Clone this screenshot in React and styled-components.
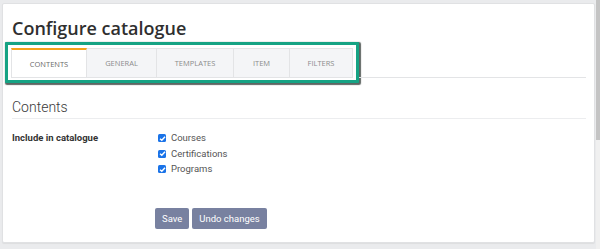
import React from "react";
import styled, { createGlobalStyle } from "styled-components";

const GlobalStyle = createGlobalStyle`
  html, body {
    margin: 0;
    padding: 0;
    background: #eaebed;
    font-family: Roboto, "Open Sans", sans-serif;
    color: #333;
  }
`;

const tabs = ["Contents", "General", "Templates", "Item", "Filters"];
const tabWidths = [76, 70, 77, 56, 63];
const options = ["Courses", "Certifications", "Programs"];

function App() {
  return (
    <>
      <GlobalStyle />
      <Page>
        <Frame>
          <Card>
            <Title>Configure catalogue</Title>
            <TabRow>
              <Highlight>
                <TabList>
                  {tabs.map((t, i) => (
                    <Tab key={t} $active={i === 0} $w={tabWidths[i]}>
                      {t}
                    </Tab>
                  ))}
                </TabList>
              </Highlight>
              <TabRule />
            </TabRow>
            <SectionTitle>Contents</SectionTitle>
            <FieldRow>
              <FieldLabel>Include in catalogue</FieldLabel>
              <Options>
                {options.map((o) => (
                  <Option key={o}>
                    <Check>
                      <svg width="7" height="7" viewBox="0 0 10 10">
                        <path d="M1.5 5.2 L4 7.6 L8.6 2.4" fill="none" stroke="#fff" strokeWidth="2" />
                      </svg>
                    </Check>
                    {o}
                  </Option>
                ))}
              </Options>
            </FieldRow>
            <Actions>
              <Button>Save</Button>
              <Button>Undo changes</Button>
            </Actions>
          </Card>
        </Frame>
        <Scrollbar>
          <Thumb />
        </Scrollbar>
      </Page>
    </>
  );
}

export default App;

const Page = styled.div`
  display: flex;
  height: 249px;
  width: 600px;
  overflow: hidden;
`;

const Frame = styled.div`
  flex: 1;
  padding: 3px 1px 4px 2px;
`;

const Card = styled.div`
  height: 240px;
  background: #fff;
  border: 1px solid #e0e1e3;
  border-radius: 2px;
  box-sizing: border-box;
  padding: 0 8px 0 9px;
  box-shadow: 0 1px 1px rgba(0, 0, 0, 0.06);
`;

const Title = styled.h1`
  margin: 0;
  padding-top: 12px;
  font-family: "Open Sans", sans-serif;
  font-size: 18px;
  font-weight: 600;
  line-height: 24px;
  color: #2f2f2f;
`;

const TabRow = styled.div`
  display: flex;
  align-items: flex-end;
  margin-top: 2px;
  margin-left: -7px;
`;

const Highlight = styled.div`
  border: 3px solid #16a384;
  padding: 3px 3px 2px 3px;
  box-shadow: 1px 1px 1px 1px rgba(40, 50, 45, 0.75);
  border-radius: 1px;
  background: #fff;
`;

const TabList = styled.div`
  display: flex;
  border-bottom: 1px solid #e3e4e6;
`;

const Tab = styled.div`
  width: ${(p) => p.$w}px;
  height: 29px;
  box-sizing: border-box;
  display: flex;
  align-items: center;
  justify-content: center;
  font-family: "Open Sans", sans-serif;
  font-size: 7.5px;
  text-transform: uppercase;
  color: ${(p) => (p.$active ? "#6a6a6a" : "#8c8c8c")};
  background: ${(p) => (p.$active ? "#fff" : "#f4f5f7")};
  border: 1px solid #e3e4e6;
  border-left-width: ${(p) => (p.$active ? "1px" : "0")};
  border-top: ${(p) => (p.$active ? "2px solid #f5a21b" : "1px solid #e3e4e6")};
  border-bottom: none;
`;

const TabRule = styled.div`
  flex: 1;
  height: 1px;
  background: #e3e4e6;
  margin-bottom: 5px;
`;

const SectionTitle = styled.h2`
  margin: 15px 0 0;
  font-size: 14px;
  font-weight: 300;
  line-height: 18px;
  color: #3a3a3a;
  padding-bottom: 2px;
  border-bottom: 1px solid #ecedef;
`;

const FieldRow = styled.div`
  display: flex;
  margin-top: 12px;
`;

const FieldLabel = styled.div`
  width: 146px;
  font-size: 9.5px;
  font-weight: 700;
  color: #333;
  line-height: 14px;
`;

const Options = styled.div`
  display: flex;
  flex-direction: column;
  gap: 1.5px;
`;

const Option = styled.label`
  display: flex;
  align-items: center;
  gap: 5px;
  font-size: 9.5px;
  color: #555;
  line-height: 14px;
`;

const Check = styled.span`
  width: 8px;
  height: 8px;
  background: #1a73e8;
  border-radius: 1.5px;
  display: flex;
  align-items: center;
  justify-content: center;
`;

const Actions = styled.div`
  display: flex;
  gap: 3px;
  margin-top: 32px;
  margin-left: 143px;
`;

const Button = styled.button`
  height: 21px;
  padding: 0 7px;
  border: none;
  border-radius: 2px;
  background: #7881a0;
  color: #fff;
  font-family: Roboto, sans-serif;
  font-size: 9.5px;
  cursor: pointer;
`;

const Scrollbar = styled.div`
  width: 4px;
  background: #f0f0f0;
`;

const Thumb = styled.div`
  height: 140px;
  background: #c4c4c4;
`;
